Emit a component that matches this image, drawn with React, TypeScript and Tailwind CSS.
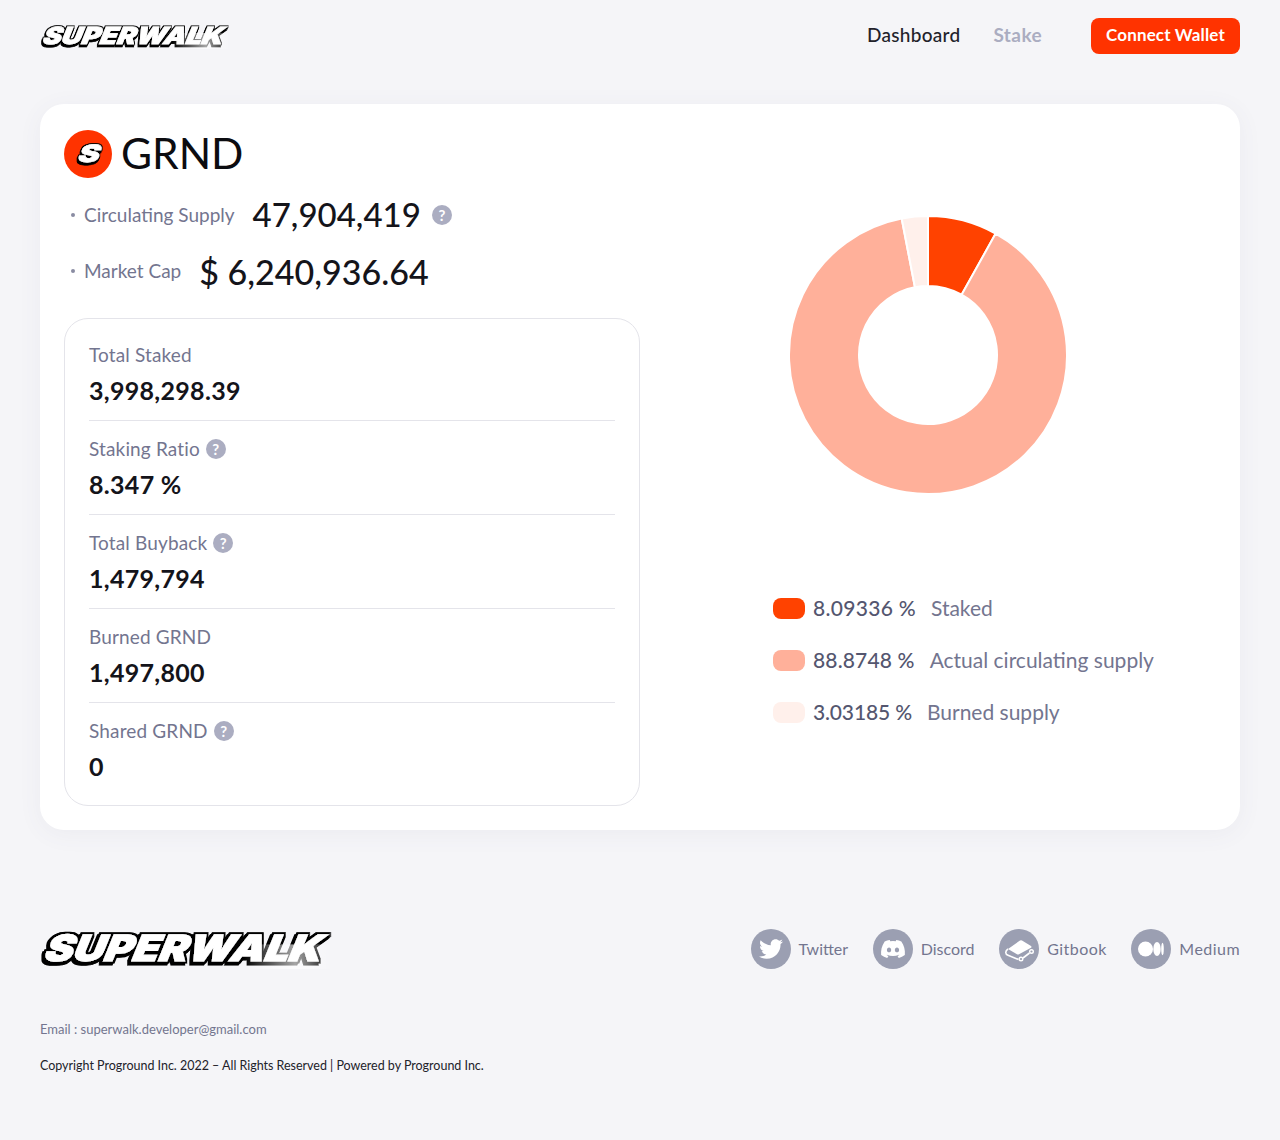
import { FaDiscord, FaTwitter } from 'react-icons/fa';

const slices = [
  { value: 8.09336, color: '#ff4200' },
  { value: 88.8748, color: '#ffb09a' },
  { value: 3.03185, color: '#fff0eb' },
];

function arcPath(start: number, end: number, outer: number, inner: number) {
  const point = (r: number, deg: number) => {
    const rad = ((deg - 90) * Math.PI) / 180;
    return `${(140 + r * Math.cos(rad)).toFixed(2)} ${(140 + r * Math.sin(rad)).toFixed(2)}`;
  };
  const large = end - start > 180 ? 1 : 0;
  return `M${point(outer, start)} A${outer} ${outer} 0 ${large} 1 ${point(outer, end)} L${point(inner, end)} A${inner} ${inner} 0 ${large} 0 ${point(inner, start)} Z`;
}

function Donut() {
  let angle = 0;
  return (
    <svg width="280" height="280" viewBox="0 0 280 280">
      {slices.map((s) => {
        const start = angle;
        angle += (s.value / 100) * 360;
        return (
          <path
            key={s.color}
            d={arcPath(start, angle, 139, 69)}
            fill={s.color}
            stroke="#ffffff"
            strokeWidth="2"
            strokeLinejoin="round"
          />
        );
      })}
    </svg>
  );
}

// black outline plus a hard drop to the lower left, built from the glyph shape
function OutlineFilter({ id, grow }: { id: string; grow: number }) {
  return (
    <filter id={id} filterUnits="userSpaceOnUse" x="-10" y="-10" width="220" height="60">
      <feMorphology in="SourceAlpha" operator="dilate" radius={grow} result="fat" />
      <feOffset in="fat" dx="-1.4" dy="1.6" result="drop" />
      <feMerge>
        <feMergeNode in="drop" />
        <feMergeNode in="fat" />
        <feMergeNode in="SourceGraphic" />
      </feMerge>
    </filter>
  );
}

function Logo({ width, height, id }: { width: number; height: number; id: string }) {
  return (
    <svg width={width} height={height} viewBox="0 0 188 26" className="overflow-visible">
      <defs>
        <linearGradient id={`${id}-fade`} gradientUnits="userSpaceOnUse" x1="132" x2="188" y1="0" y2="0">
          <stop offset="0" stopColor="#ffffff" stopOpacity="0" />
          <stop offset="0.6" stopColor="#ffffff" stopOpacity="0.65" />
          <stop offset="1" stopColor="#ffffff" stopOpacity="0.1" />
        </linearGradient>
        <OutlineFilter id={`${id}-outline`} grow={1.2} />
      </defs>
      <g filter={`url(#${id}-outline)`}>
        <text
          x="1"
          y="21"
          transform="skewX(-22)"
          transform-origin="0 21"
          textLength="180"
          lengthAdjust="spacingAndGlyphs"
          fontFamily="Inter, sans-serif"
          fontWeight="900"
          fontSize="23.5"
          fill="#ffffff"
          stroke="#ffffff"
          strokeWidth="0.7"
        >
          SUPERWALK
        </text>
      </g>
      <rect x="132" y="10" width="56" height="16" fill={`url(#${id}-fade)`} />
    </svg>
  );
}

function Help({ className = '' }: { className?: string }) {
  return (
    <span
      className={`inline-flex h-5 w-5 items-center justify-center rounded-full bg-[#abadc1] text-[15px] leading-none font-bold text-white ${className}`}
    >
      ?
    </span>
  );
}

function Stat({ label, value, help, last }: { label: string; value: string; help?: boolean; last?: boolean }) {
  return (
    <div className={`flex h-[94px] flex-col pt-[18px] ${last ? '' : 'border-b border-[#e4e4ea]'}`}>
      <div className="flex h-5 items-center gap-[6px] text-[19px] leading-5 tracking-[0.15px] text-[#73758f]">
        {label}
        {help && <Help />}
      </div>
      <div className="mt-[9px] text-[25px] leading-8 font-bold tracking-[0.3px] text-[#14141a]">{value}</div>
    </div>
  );
}

function LegendRow({ color, pct, label, pctClass }: { color: string; pct: string; label: string; pctClass: string }) {
  return (
    <div className="flex h-[52px] items-center text-[21px]">
      <span className="h-[21px] w-8 rounded-lg" style={{ backgroundColor: color }} />
      <span className={`ml-2 font-medium text-[#54566f] ${pctClass}`}>{pct}</span>
      <span className="ml-[15px] text-[#73758f]">{label}</span>
    </div>
  );
}

function Social({ icon, label, textClass = '' }: { icon: React.ReactNode; label: string; textClass?: string }) {
  return (
    <div className={`flex items-center gap-2 text-[16px] text-[#73758f] ${textClass}`}>
      <span className="flex h-10 w-10 items-center justify-center rounded-full bg-[#9b9fb2] text-white">{icon}</span>
      {label}
    </div>
  );
}

function GitbookIcon() {
  return (
    <svg width="40" height="40" viewBox="0 0 40 40" fill="none">
      <path
        d="M9 20 L21 11.5 Q22 11 23 11.5 L32 17 Q33 18 32 18.7 L20 25.2 Q19 25.7 18 25.2 Z"
        fill="currentColor"
      />
      <path d="M9 20 C6 22 6 25 9 26.2 L19.5 30.5" stroke="currentColor" strokeWidth="1.6" />
      <circle cx="22" cy="30" r="1.8" stroke="currentColor" strokeWidth="1.4" />
      <path d="M24 29 L30.5 24" stroke="currentColor" strokeWidth="1.6" />
      <circle cx="32.5" cy="22.5" r="1.8" stroke="currentColor" strokeWidth="1.4" />
    </svg>
  );
}

export default function App() {
  return (
    <div className="min-h-[1140px] bg-[#f5f5f8] px-10 font-['Lato',sans-serif]">
      {/* Header */}
      <header className="flex h-[72px] items-center justify-between">
        <Logo id="top" width={188} height={26} />
        <nav className="flex items-center">
          <span className="pb-[2px] text-[19px] font-medium tracking-[0.3px] text-[#22222a]">Dashboard</span>
          <span className="ml-[33px] pb-[2px] text-[19px] font-bold tracking-[0.4px] text-[#abadc1]">Stake</span>
          <button className="ml-[49px] h-9 w-[149px] rounded-lg bg-[#ff3300] pb-[2px] text-[17px] font-bold tracking-[0.15px] text-white">
            Connect Wallet
          </button>
        </nav>
      </header>

      {/* Main card */}
      <main className="mt-8 flex h-[726px] rounded-3xl bg-white px-6 pt-[26px] pb-6 shadow-[0_4px_24px_rgba(80,80,120,0.06)]">
        <section className="w-[576px]">
          <div className="flex h-12 items-center gap-[9px]">
            <span className="flex h-12 w-12 items-center justify-center rounded-full bg-[#ff3300]">
              <svg width="44" height="36" viewBox="0 0 44 36">
                <defs>
                  <OutlineFilter id="coin-outline" grow={0.8} />
                </defs>
                <g filter="url(#coin-outline)">
                  <text
                    x="21"
                    y="26"
                    textAnchor="middle"
                    transform="skewX(-20) scale(1.35 1)"
                    transform-origin="21 26"
                    fontFamily="Inter, sans-serif"
                    fontWeight="900"
                    fontSize="24"
                    fill="#ffffff"
                    stroke="#ffffff"
                    strokeWidth="0.4"
                  >
                    S
                  </text>
                </g>
              </svg>
            </span>
            <span className="mb-[2px] text-[42.5px] leading-[42px] text-[#0c0c10]">GRND</span>
          </div>

          <div className="mt-[9px] flex h-14 items-center pl-[7px]">
            <span className="h-1 w-1 rounded-full bg-[#8a8ca2]" />
            <span className="ml-[9px] text-[19px] text-[#73758f]">Circulating Supply</span>
            <span className="ml-[18px] text-[33px] font-medium text-[#14141a]">47,904,419</span>
            <Help className="ml-[11px]" />
          </div>
          <div className="flex h-14 items-center pl-[7px]">
            <span className="h-1 w-1 rounded-full bg-[#8a8ca2]" />
            <span className="ml-[9px] text-[19px] text-[#73758f]">Market Cap</span>
            <span className="ml-[18px] text-[34px] font-medium text-[#14141a]">$ 6,240,936.64</span>
          </div>

          <div className="mt-[19px] h-[488px] rounded-3xl border border-[#e4e4ea] px-6 pt-2">
            <Stat label="Total Staked" value="3,998,298.39" />
            <Stat label="Staking Ratio" value="8.347 %" help />
            <Stat label="Total Buyback" value="1,479,794" help />
            <Stat label="Burned GRND" value="1,497,800" />
            <Stat label="Shared GRND" value="0" help last />
          </div>
        </section>

        <section className="flex-1">
          <div className="mt-[85px] flex justify-center">
            <Donut />
          </div>
          <div className="mt-[87px] ml-[133px]">
            <LegendRow color="#ff4200" pct="8.09336 %" label="Staked" pctClass="tracking-[0.3px]" />
            <LegendRow color="#ffb09a" pct="88.8748 %" label="Actual circulating supply" pctClass="tracking-[0.15px]" />
            <LegendRow color="#fff0eb" pct="3.03185 %" label="Burned supply" pctClass="tracking-[-0.15px]" />
          </div>
        </section>
      </main>

      {/* Footer */}
      <footer className="mt-[99px]">
        <div className="flex items-center justify-between">
          <Logo id="bottom" width={290} height={40} />
          <div className="flex items-center gap-[24.6px]">
            <Social icon={<FaTwitter size={24} />} label="Twitter" />
            <Social icon={<FaDiscord size={26} />} label="Discord" />
            <Social icon={<GitbookIcon />} label="Gitbook" textClass="tracking-[0.45px]" />
            <Social
              icon={
                <svg width="26" height="16" viewBox="0 0 26 16" fill="currentColor">
                  <ellipse cx="7.5" cy="8" rx="7.5" ry="7.5" />
                  <ellipse cx="19" cy="8" rx="3.7" ry="7" />
                  <ellipse cx="24.5" cy="8" rx="1.3" ry="6.2" />
                </svg>
              }
              label="Medium"
              textClass="tracking-[0.45px]"
            />
          </div>
        </div>
        <p className="mt-[50px] text-[13px] leading-5 text-[#73758f]">Email : superwalk.developer@gmail.com</p>
        <p className="mt-[17px] text-[12.5px] leading-5 tracking-[-0.02px] text-[#22222a]">
          Copyright Proground Inc. 2022 – All Rights Reserved | Powered by Proground Inc.
        </p>
      </footer>
    </div>
  );
}
